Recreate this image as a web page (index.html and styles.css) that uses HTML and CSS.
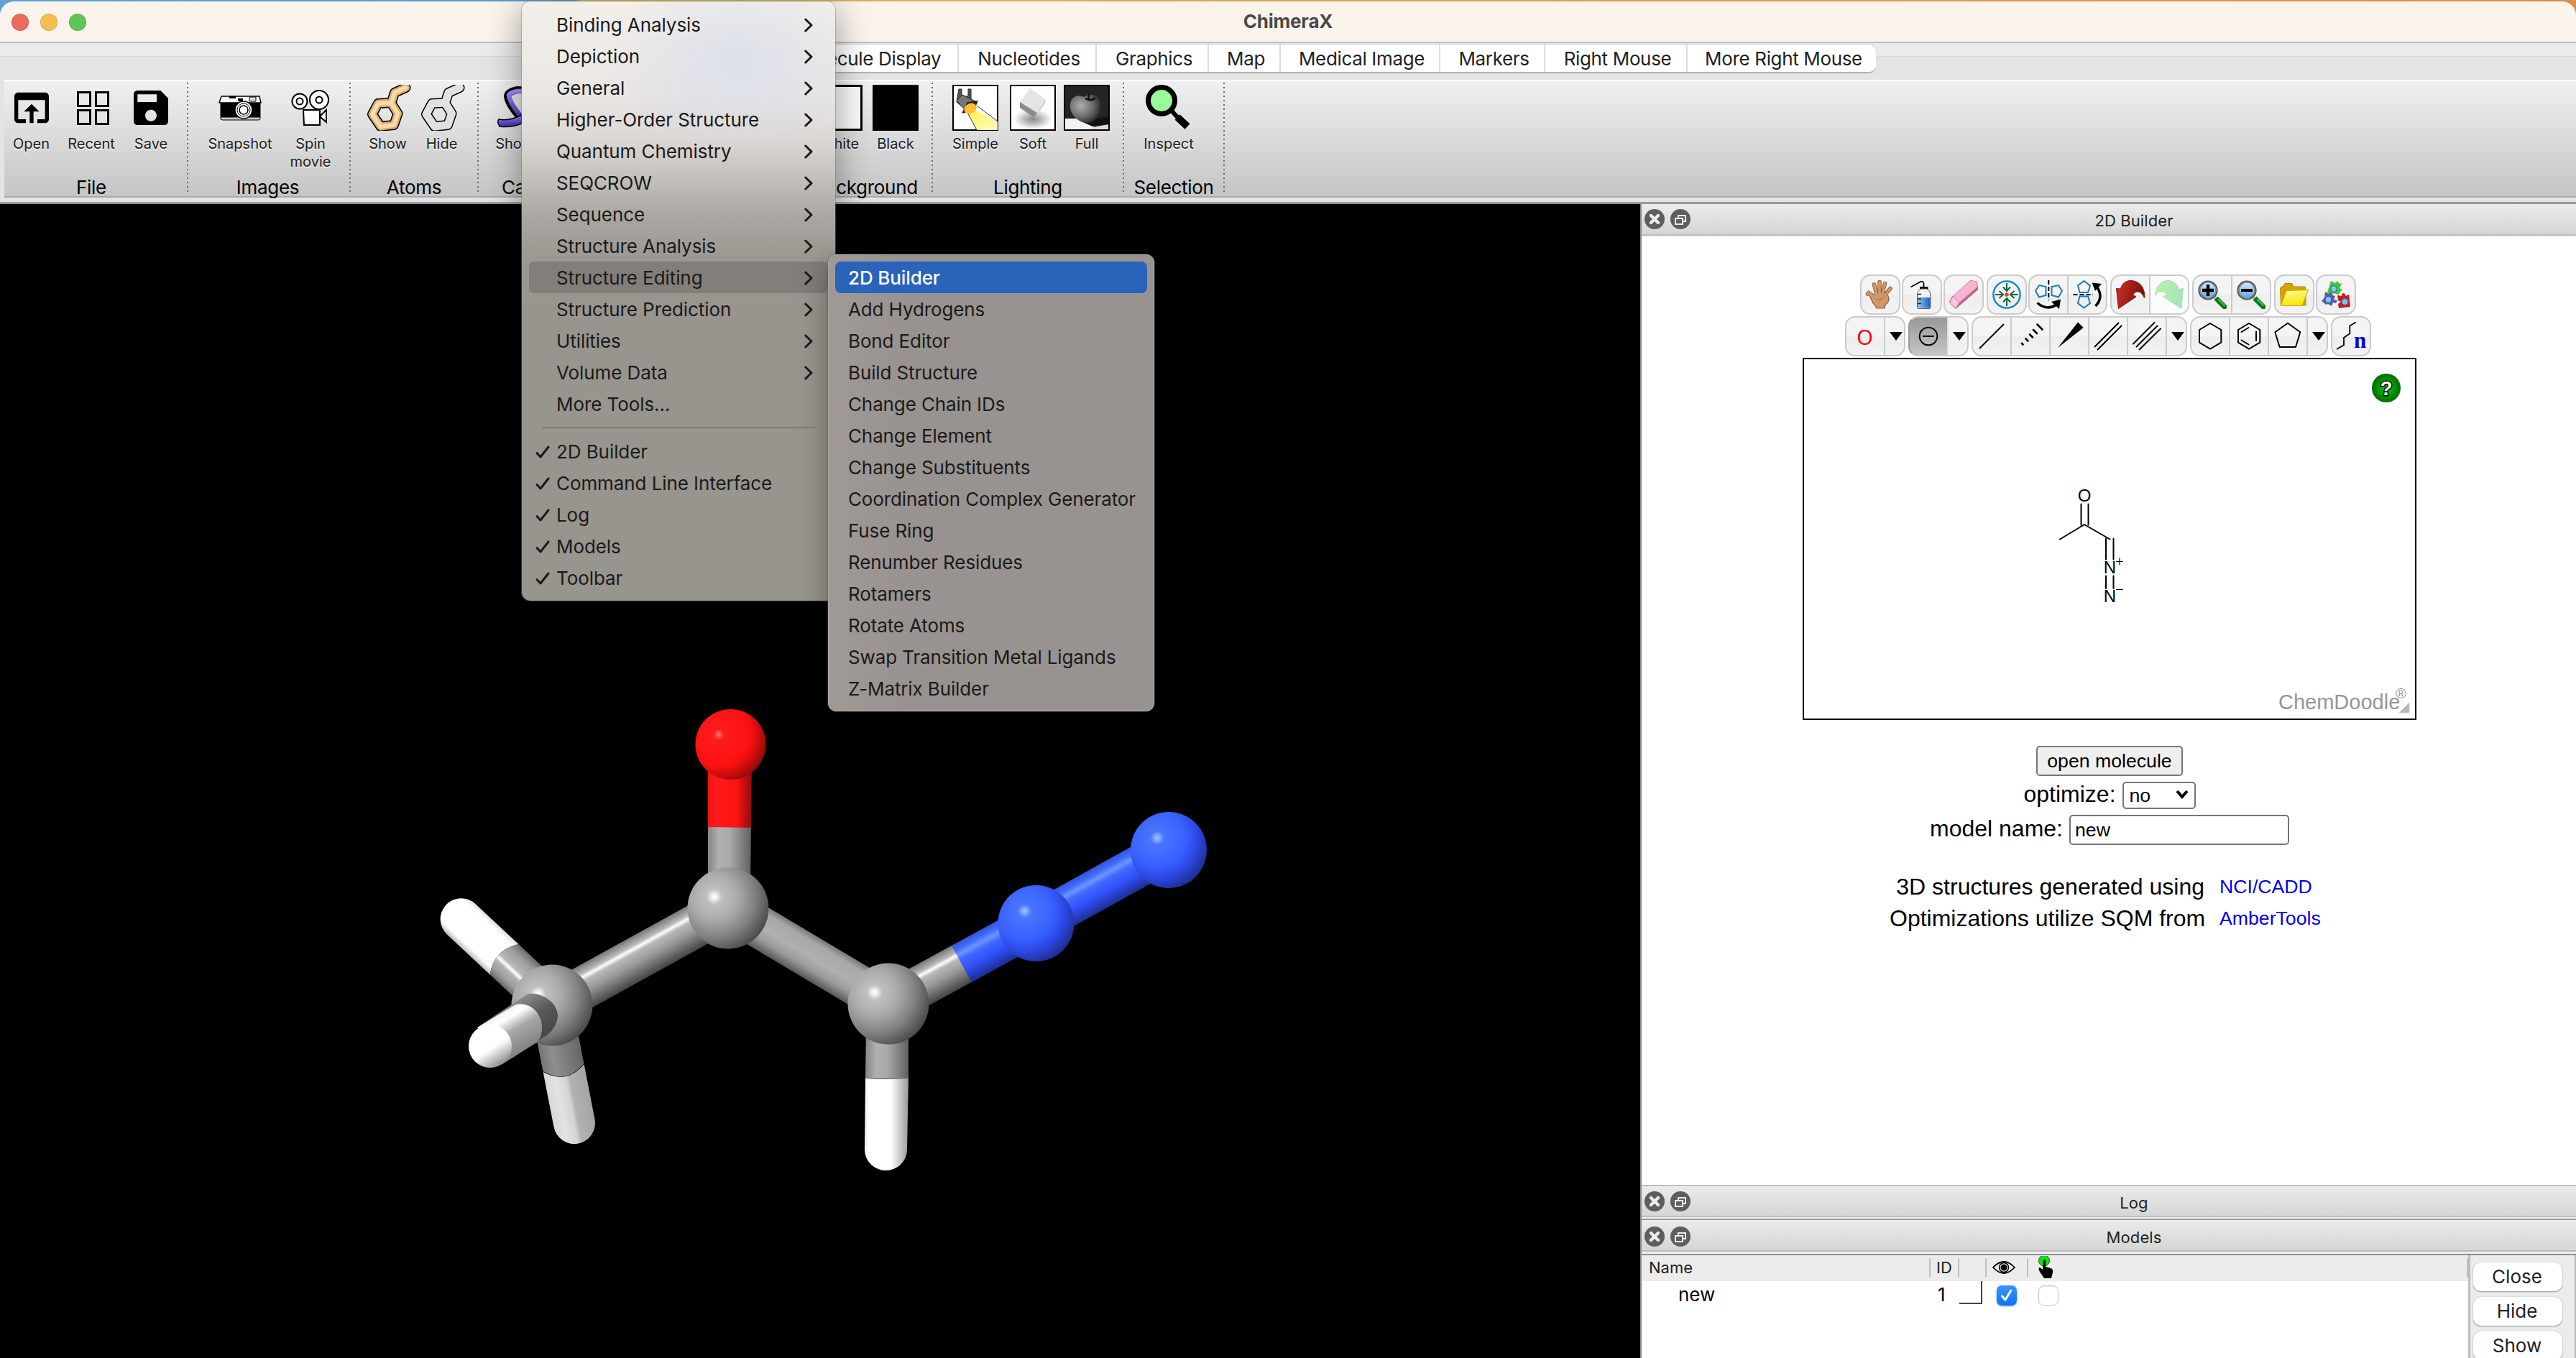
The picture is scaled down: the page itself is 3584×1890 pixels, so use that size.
FILE: index.html
```html
<!DOCTYPE html>
<html lang="en">
<head>
<meta charset="utf-8">
<title>ChimeraX</title>
<link rel="stylesheet" href="styles.css">
</head>
<body>
<svg class="defs" width="0" height="0" aria-hidden="true">
  <defs>
    <symbol id="chev" viewBox="0 0 12 20"><path d="M1.8 2 10 10 1.8 18" fill="none" stroke="currentColor" stroke-width="3" stroke-linecap="round" stroke-linejoin="round"/></symbol>
    <symbol id="check" viewBox="0 0 20 18"><path d="M2 10.500 7 16 18 2" fill="none" stroke="currentColor" stroke-width="3" stroke-linecap="round" stroke-linejoin="round"/></symbol>
    <symbol id="x" viewBox="0 0 28 28"><circle cx="14" cy="14" r="14" fill="#5e5e5e"/><path d="M9 9 19 19M19 9 9 19" stroke="#ececec" stroke-width="4.400" stroke-linecap="round"/></symbol>
    <symbol id="float" viewBox="0 0 28 28"><circle cx="14" cy="14" r="14" fill="#5e5e5e"/><path d="M11 12V9H21V17H18" fill="none" stroke="#ececec" stroke-width="2"/><rect x="7" y="13" width="10" height="8" fill="none" stroke="#ececec" stroke-width="2"/></symbol>
    <symbol id="tri" viewBox="0 0 18 12"><path d="M0 0H18L9 12Z" fill="#000"/></symbol>
    <symbol id="lens" viewBox="0 0 40 40"><path d="M22 23 29 30" stroke="#bbb" stroke-width="4"/><path d="M27.500 27.500 37 37" stroke="#087a1c" stroke-width="7" stroke-linecap="square"/><path d="M28.500 26.500 37.500 35.500" stroke="#3cc45a" stroke-width="2"/><circle cx="14" cy="14" r="12" fill="url(#glass)" stroke="#555" stroke-width="3.200"/><circle cx="14" cy="14" r="11.300" fill="none" stroke="#aaa" stroke-width="1"/></symbol>
    <symbol id="stick" viewBox="0 0 64 64"><path d="M18 26 36 25 45.500 40 40 56 21.500 58 10 41Z M36.500 25 41 11 56.500 4" /></symbol>
    <linearGradient id="glass" x2="0" y2="1"><stop stop-color="#d9ecfb"/><stop offset="1" stop-color="#5aa5e6"/></linearGradient>
    <linearGradient id="liq"><stop stop-color="#8cc8f0"/><stop offset="1" stop-color="#1560c4"/></linearGradient>
    <linearGradient id="fold" x2="0.300" y2="1"><stop stop-color="#fff9a0"/><stop offset="1" stop-color="#fae800"/></linearGradient>
    <linearGradient id="undo" x2="1" y2="0.300"><stop stop-color="#d03028"/><stop offset="1" stop-color="#7d100c"/></linearGradient>
    <linearGradient id="redo" x2="1"><stop stop-color="#b8f2a4"/><stop offset="1" stop-color="#a6e2bd"/></linearGradient>
    <radialGradient id="help"><stop stop-color="#00d400"/><stop offset="1" stop-color="#006a00"/></radialGradient>
    <linearGradient id="rib" x2="0" y2="1"><stop stop-color="#a48cff"/><stop offset="1" stop-color="#3d2aa8"/></linearGradient>
    <radialGradient id="apple" cx=".35" cy=".4" r=".7"><stop stop-color="#b0b0b0"/><stop offset=".6" stop-color="#666"/><stop offset="1" stop-color="#222"/></radialGradient>
    <radialGradient id="soft"><stop stop-color="#888"/><stop offset="1" stop-color="#fff"/></radialGradient>
    <linearGradient id="beam" x2="1" y2="1"><stop stop-color="#fff250"/><stop offset="1" stop-color="#fdfcc0"/></linearGradient>
    <linearGradient id="cg" x2="0" y2="1"><stop stop-color="#777"/><stop offset=".2" stop-color="#bbb"/><stop offset=".27" stop-color="#fff"/><stop offset=".36" stop-color="#b8b8b8"/><stop offset=".6" stop-color="#989898"/><stop offset="1" stop-color="#444"/></linearGradient>
    <linearGradient id="ch" x2="0" y2="1"><stop stop-color="#6a6a6a"/><stop offset=".2" stop-color="#9c9c9c"/><stop offset=".48" stop-color="#b8b8b8"/><stop offset=".56" stop-color="#fff"/><stop offset=".64" stop-color="#b4b4b4"/><stop offset=".85" stop-color="#9a9a9a"/><stop offset="1" stop-color="#666"/></linearGradient>
    <linearGradient id="cf" x2="0" y2="1"><stop stop-color="#777"/><stop offset=".16" stop-color="#a8a8a8"/><stop offset=".5" stop-color="#b0b0b0"/><stop offset=".75" stop-color="#999"/><stop offset="1" stop-color="#585858"/></linearGradient>
    <linearGradient id="cb" x2="0" y2="1"><stop stop-color="#3354d8"/><stop offset=".15" stop-color="#416cff"/><stop offset=".27" stop-color="#6c94ff"/><stop offset=".4" stop-color="#4068ff"/><stop offset=".65" stop-color="#3050fb"/><stop offset="1" stop-color="#1d2f90"/></linearGradient>
    <linearGradient id="vg"><stop stop-color="#858585"/><stop offset=".25" stop-color="#b0b0b0"/><stop offset=".5" stop-color="#aaa"/><stop offset="1" stop-color="#606060"/></linearGradient>
    <linearGradient id="vr"><stop stop-color="#f01414"/><stop offset=".2" stop-color="#ff1a1a"/><stop offset=".65" stop-color="#ff1212"/><stop offset="1" stop-color="#8c0c0c"/></linearGradient>
    <linearGradient id="vw"><stop stop-color="#eee"/><stop offset=".1" stop-color="#fff"/><stop offset=".6" stop-color="#fff"/><stop offset="1" stop-color="#999"/></linearGradient>
    <linearGradient id="hw" x2="0" y2="1"><stop stop-color="#ddd"/><stop offset=".12" stop-color="#fff"/><stop offset=".85" stop-color="#fff"/><stop offset="1" stop-color="#bbb"/></linearGradient>
    <linearGradient id="hf" gradientUnits="userSpaceOnUse" x1="693" y1="1411" x2="725" y2="1463"><stop stop-color="#f2f2f2"/><stop offset=".2" stop-color="#fff"/><stop offset=".5" stop-color="#a8a8a8"/><stop offset="1" stop-color="#858585"/></linearGradient>
    <linearGradient id="df" gradientUnits="userSpaceOnUse" x1="735" y1="1384" x2="770" y2="1438"><stop stop-color="#8a8a8a"/><stop offset=".45" stop-color="#585858"/><stop offset="1" stop-color="#464646"/></linearGradient>
    <linearGradient id="hc" x1=".2" y1=".1" x2=".75" y2=".95"><stop offset=".55" stop-color="#fff"/><stop offset="1" stop-color="#8c8c8c"/></linearGradient>
    <linearGradient id="hl"><stop stop-color="#d8d8d8"/><stop offset=".25" stop-color="#e2e2e2"/><stop offset=".5" stop-color="#d4d4d4"/><stop offset=".6" stop-color="#b2b2b2"/><stop offset="1" stop-color="#a4a4a4"/></linearGradient>
    <linearGradient id="gl"><stop stop-color="#777"/><stop offset=".3" stop-color="#8f8f8f"/><stop offset="1" stop-color="#666"/></linearGradient>
    <radialGradient id="sc" cx=".33" cy=".36" r=".72"><stop stop-color="#fff"/><stop offset=".04" stop-color="#f4f4f4"/><stop offset=".13" stop-color="#c0c0c0"/><stop offset=".4" stop-color="#aaa"/><stop offset=".7" stop-color="#808080"/><stop offset="1" stop-color="#484848"/></radialGradient>
    <radialGradient id="sb" cx=".35" cy=".34" r=".75"><stop stop-color="#a6c8ff"/><stop offset=".12" stop-color="#4875ff"/><stop offset=".5" stop-color="#3860ff"/><stop offset=".7" stop-color="#2c48e6"/><stop offset="1" stop-color="#1b2a80"/></radialGradient>
    <radialGradient id="so" cx=".33" cy=".36" r=".75"><stop stop-color="#ff7a7a"/><stop offset=".1" stop-color="#ff1c1c"/><stop offset=".6" stop-color="#fc1010"/><stop offset=".8" stop-color="#c40c0c"/><stop offset="1" stop-color="#7c0a0a"/></radialGradient>
  </defs>
</svg>

<div class="desktop">
<div class="window">
  <header class="titlebar">
    <div class="lights"><i class="red"></i><i class="yellow"></i><i class="green"></i></div>
    <h1>ChimeraX</h1>
  </header>

  <section class="ribbon">
    <nav class="tabs">
      <span class="tab w104">Home</span><span class="tab w256">Molecule Display</span><span class="tab w192">Nucleotides</span><span class="tab w156">Graphics</span><span class="tab w100">Map</span><span class="tab w222">Medical Image</span><span class="tab w146">Markers</span><span class="tab w198">Right Mouse</span><span class="tab last">More Right Mouse</span>
    </nav>
    <div class="toolbar">
      <div class="group g-file">
        <div class="items">
          <div class="tool w75"><svg viewBox="0 0 24 24"><path d="M19 4H5c-1.110 0-2 .9-2 2v12c0 1.100.89 2 2 2h4v-2H5V8h14v10h-4v2h4c1.100 0 2-.9 2-2V6c0-1.100-.89-2-2-2zm-7 6l-4 4h3v6h2v-6h3l-4-4z"/></svg><span>Open</span></div>
          <div class="tool w92"><svg viewBox="0 0 64 64"><path d="M13.500 10.500h17v19h-17zM38.500 10.500h17v19h-17zM13.500 35.500h17v19h-17zM38.500 35.500h17v19h-17z" fill="none" stroke="#000" stroke-width="3"/></svg><span>Recent</span></div>
          <div class="tool w74"><svg viewBox="0 0 24 24"><path d="M17 3H5c-1.110 0-2 .9-2 2v14c0 1.100.89 2 2 2h14c1.100 0 2-.9 2-2V7l-4-4zm-5 16c-1.660 0-3-1.340-3-3s1.340-3 3-3 3 1.340 3 3-1.340 3-3 3zm3-10H5V5h10v4z"/></svg><span>Save</span></div>
        </div>
        <b>File</b>
      </div>
      <div class="group g-images">
        <div class="items">
          <div class="tool w102"><svg viewBox="0 0 64 64"><path d="M6 16H59L61 25H3Z" fill="#fff" stroke="#000" stroke-width="1.500"/><path d="M17 16h9v3h-9zM29 19h7v4h-7z"/><path d="M45 17h9v6h-9z" fill="#ddd" stroke="#000"/><rect x="4.500" y="25" width="56" height="20" /><path d="M5 45H60V47Q60 49 57 49H8Q5 49 5 47Z" fill="#ccc" stroke="#000"/><circle cx="37" cy="35" r="12" fill="#fff" stroke="#000" stroke-width="1.500"/><circle cx="37" cy="35" r="9" fill="none" stroke="#000"/><circle cx="37" cy="35" r="6" fill="none" stroke="#000" stroke-width="1.500"/></svg><span>Snapshot</span></div>
          <div class="tool w94"><svg viewBox="0 0 64 64"><g fill="#fff" stroke="#000" stroke-width="2"><circle cx="17" cy="23" r="10.500"/><circle cx="44" cy="21" r="13"/><circle cx="17" cy="23" r="4.500"/><circle cx="44" cy="21" r="4.500"/><path d="M22 35H45V56H23ZM46 43 54 35V52L46 45Z"/></g></svg><span>Spin<br>movie</span></div>
        </div>
        <b>Images</b>
      </div>
      <div class="group g-atoms">
        <div class="items">
          <div class="tool w75"><svg viewBox="0 0 64 64" fill="none" stroke-linejoin="round" stroke-linecap="round"><use href="#stick" stroke="#000" stroke-width="14"/><use href="#stick" stroke="#d9ab73" stroke-width="11"/><use href="#stick" stroke="#fbd9a8" stroke-width="6"/></svg><span>Show</span></div>
          <div class="tool w75"><svg viewBox="0 0 64 64" fill="none" stroke-linejoin="round" stroke-linecap="round"><use href="#stick" stroke="#000" stroke-width="14"/><use href="#stick" stroke="#e1e1e1" stroke-width="11"/></svg><span>Hide</span></div>
        </div>
        <b>Atoms</b>
      </div>
      <div class="group g-cartoons">
        <div class="items">
          <div class="tool w75"><svg viewBox="0 0 64 64"><path d="M60 8 36 7Q22 10 22 16Q24 30 46 52L60 60" fill="none" stroke="#000" stroke-width="10"/><path d="M60 8 36 9Q24 11 24 15Q26 28 48 52" fill="none" stroke="url(#rib)" stroke-width="6.500"/><path d="M10 48Q24 51 42 42V54Q26 60 11 58Q7 52 10 48Z" fill="url(#rib)" stroke="#000" stroke-width="1.500"/></svg><span>Show</span></div>
        </div>
        <b class="b-cartoons">Cartoons</b>
      </div>
      <div class="group g-background">
        <div class="items">
          <div class="tool w78"><svg viewBox="0 0 64 64"><rect x="1.500" y="1.500" width="61" height="61" fill="#fafafa" stroke="#000" stroke-width="3"/></svg><span>White</span></div>
          <div class="tool w78"><svg viewBox="0 0 64 64"><rect width="64" height="64"/></svg><span>Black</span></div>
        </div>
        <b>Background</b>
      </div>
      <div class="group g-lighting">
        <div class="items">
          <div class="tool w84"><svg viewBox="0 0 64 64"><rect x="1" y="1" width="62" height="62" fill="#fff" stroke="#000" stroke-width="2"/><path d="M32 35 63 51V63H34L20 37Z" fill="url(#beam)"/><path d="M20 37 34 63M34 29 63 51" stroke="#333" fill="none"/><path d="M9 6h4v10h9V6h4v18l-8 10-12-10Z" fill="#555" stroke="#222"/><path d="M6 22 14 14 34 24 20 38Z" fill="#777" stroke="#222"/><path d="M13 40 21 24 36 22 30 36Z" fill="#222"/><ellipse cx="25" cy="33" rx="9" ry="7" fill="#fdbf2d" transform="rotate(-25 25 33)"/></svg><span>Simple</span></div>
          <div class="tool w76"><svg viewBox="0 0 64 64"><rect x="1" y="1" width="62" height="62" fill="#fff" stroke="#000" stroke-width="2"/><ellipse cx="32" cy="48" rx="27" ry="14" fill="url(#soft)"/><path d="M28 5 50 20 38 39 14 24Z" fill="#e4e4e4"/><path d="M14 24 38 39 34 46 14 32Z" fill="#8c8c8c"/><path d="M38 39 50 20 49 26 34 46Z" fill="#ccc"/></svg><span>Soft</span></div>
          <div class="tool w74"><svg viewBox="0 0 64 64"><rect width="64" height="64" fill="#242424"/><path d="M1 47H22L48 62H1Z" fill="#f2f2f2"/><path d="M22 50 63 44V56L40 58Z" fill="#111"/><path d="M45 58 63 55V63H30Z" fill="#ddd"/><path d="M28 17Q40 10 48 18Q56 30 46 47Q34 58 20 49Q5 38 10 22Q16 12 28 17Z" fill="url(#apple)"/><path d="M36 12Q33 18 36 21M30 19Q38 24 44 18" stroke="#111" stroke-width="2.500" fill="none"/><rect x="1" y="1" width="62" height="62" fill="none" stroke="#000" stroke-width="2"/></svg><span>Full</span></div>
        </div>
        <b>Lighting</b>
      </div>
      <div class="group g-selection">
        <div class="items">
          <div class="tool w120"><svg viewBox="0 0 64 64"><path d="M36 36 44 45" stroke="#000" stroke-width="6"/><path d="M44 45 58 58" stroke="#000" stroke-width="10"/><circle cx="22" cy="22" r="18.500" fill="#98fb98" stroke="#000" stroke-width="7"/></svg><span>Inspect</span></div>
        </div>
        <b>Selection</b>
      </div>
    </div>
  </section>

  <main class="main">
    <div class="viewer">
      <svg width="2282" height="1606" viewBox="0 284 2282 1606">
        <g transform="translate(799 1563) rotate(-11)">
          <path d="M-29 -78V0A29 29 0 0 0 29 0V-78Q0 -54 -29 -78Z" fill="url(#hl)"/>
          <path d="M-29 -150V-79Q0 -54 29 -79V-150Z" fill="url(#gl)"/>
        </g>
        <g transform="translate(641 1280) rotate(43.100)">
          <path d="M0 -30H82Q62 0 82 28H0A29 29 0 0 1 0 -30Z" fill="url(#hw)"/>
          <path d="M82 -30H160V28H82Q62 0 82 -30Z" fill="url(#ch)"/>
        </g>
        <rect x="0" y="-30" width="280" height="60" transform="translate(768 1399) rotate(-28.900)" fill="url(#cg)"/>
        <rect x="0" y="-29.500" width="260" height="59" transform="translate(1013 1264) rotate(30.800)" fill="url(#cf)"/>
        <g transform="translate(1236 1397) rotate(-28.600)"><rect y="-29" width="117" height="58" fill="url(#cg)"/><rect x="116" y="-29" width="118" height="58" fill="url(#cb)"/></g>
        <rect x="0" y="-29" width="211" height="58" transform="translate(1441.500 1285) rotate(-29)" fill="url(#cb)"/>
        <path d="M985 1151H1045L1044 1230H985Z" fill="url(#vg)"/>
        <path d="M985 1060H1046L1045 1152 985 1151Z" fill="url(#vr)"/>
        <path d="M1205 1430H1264V1502L1204 1501Z" fill="url(#vg)"/>
        <path d="M1204 1501Q1234 1503 1264 1501L1262 1600A29.500 29 0 0 1 1203 1600Z" fill="url(#vw)"/>
        <circle cx="768" cy="1399" r="56.500" fill="url(#sc)"/>
        <path d="M667 1428 733 1384Q742 1381 752 1385 774 1394 776 1412 776 1428 762 1440L703 1477Z" fill="url(#df)"/>
        <path d="M664 1430 716 1399Q724 1395 736 1400 752 1408 754 1428 755 1440 748 1450L699 1481Z" fill="url(#hf)"/>
        <circle cx="682" cy="1456" r="30" fill="url(#hc)"/>
        <circle cx="1013" cy="1264" r="56.500" fill="url(#sc)"/>
        <circle cx="1236" cy="1397" r="56.500" fill="url(#sc)"/>
        <circle cx="1016.500" cy="1036" r="49" fill="url(#so)"/>
        <circle cx="1441.500" cy="1285" r="53" fill="url(#sb)"/>
        <circle cx="1626" cy="1183" r="53" fill="url(#sb)"/>
      </svg>
    </div>

    <aside class="dock">
      <div class="dock-title first"><svg><use href="#x"/></svg><svg><use href="#float"/></svg><span>2D Builder</span></div>
      <div class="builder">
        <div class="brow">
          <div class="bset">
            <div class="bgrp"><i class="cell"><svg viewBox="0 0 40 40" stroke-linecap="round" fill="none"><path d="M13 24 4 17.500 2.500 19M15 20 11.500 6M19 18 19 2.500M23 18 26.500 4.500M26 21 34 11.500" stroke="#8d5c38" stroke-width="5.500"/><path d="M10 22Q14 17 28 18L31 22Q34 30 27 34L26 39H15Q13 34 10 32L4 19Z" fill="#d0986a" stroke="#8d5c38" stroke-width="1.200"/><path d="M13 24 4 17.500 2.500 19M15 20 11.500 6M19 20 19 2.500M23 19 26.500 4.500M26 22 34 11.500" stroke="#d0986a" stroke-width="3.700"/><path d="M14 27Q20 28 26 23M17 32Q20 30 21 26" stroke="#a87448" stroke-width="1"/></svg></i></div>
            <div class="bgrp"><i class="cell"><svg viewBox="0 0 40 40"><path d="M4.500 9.500 18 2Q22.500 1 22.500 5V10" fill="none" stroke="#000" stroke-width="1.800"/><rect x="17" y="9" width="11.500" height="3.500"/><path d="M18 12H27Q32 15 32 20V38Q32 39.500 30 39.500H15.500Q13.500 39.500 13.500 38V20Q13.500 15 18 12Z" fill="#f3f0ee" stroke="#555"/><path d="M14 24H31.500V38.500H14Z" fill="url(#liq)"/><path d="M14 19.500H19M14 26H19M14 32.500H19" stroke="#222" stroke-width="1.300"/></svg></i></div>
            <div class="bgrp"><i class="cell"><svg viewBox="0 0 40 40"><path d="M4.700 22 29.700 .5 38.500 2 39.700 13 8.700 39.500 .5 30.500Z" fill="#f7a8cb" stroke="#b0688c"/><path d="M4.700 22 14 31 39.500 9V13.500L9.500 39.500Z" fill="#b96a92"/><path d="M5 22 14 31 9 39.500 .7 31Z" fill="#fbc6de" stroke="#b0688c" stroke-width=".8"/><path d="M5 21.500 14 30.500 39 8 38 2 30 .8Z" fill="#fab4d2"/></svg></i></div>
          </div>
          <div class="bset">
            <div class="bgrp"><i class="cell"><svg viewBox="0 0 40 40" fill="none"><circle cx="20" cy="20" r="18.600" stroke="#1486c6" stroke-width="2.400"/><path d="M20 4V15M15 9.500 20 15 25 9.500M20 36V25M15 30.500 20 25 25 30.500M4 20H15M9.500 15 15 20 9.500 25M36 20H25M30.500 15 25 20 30.500 25" stroke="#0a6b3c" stroke-width="2"/><circle cx="20" cy="20" r="2.800" fill="#e8403a"/></svg></i></div>
            <div class="bgrp"><i class="cell"><svg viewBox="0 0 40 40" fill="none"><path d="M2 15 7 7 16.500 9V21L7 23.500ZM39 15 34 7 24.500 9V21L34 23.500Z" stroke="#1f78c4" stroke-width="2"/><path d="M20.300 0V28" stroke="#000" stroke-width="2" stroke-dasharray="6 3"/><path d="M4.500 31.500Q18 43 31 34" stroke="#000" stroke-width="3.500"/><path d="M24 30 37 26.500 35 40Z" fill="#000"/></svg></i><i class="cell"><svg viewBox="0 0 40 40" fill="none"><path d="M15.300 1 24 7.500 21 17H9.500L7 7.500ZM15.300 38.500 24 32 21 22.500H9.500L7 32Z" stroke="#1f78c4" stroke-width="2"/><path d="M.5 20H28" stroke="#000" stroke-width="2" stroke-dasharray="6 3"/><path d="M31.500 36Q43 24 34 10" stroke="#000" stroke-width="3.500"/><path d="M26.500 3.500 40 5 31 15Z" fill="#000"/></svg></i></div>
          </div>
          <div class="bset">
            <div class="bgrp"><i class="cell"><svg viewBox="0 0 40 40"><path d="M40 24C40 7 30 .5 20 .5 14 .5 8 5 6.500 12L.5 11.500 3.500 39.500 28 23 23.500 20.500C26 15 35 13 39 24Z" fill="url(#undo)" stroke="#8c1511"/></svg></i><i class="cell faded"><svg viewBox="0 0 40 40"><path d="M.5 21C2 6 10 .5 19 .5 26 .5 31 5 33 12.500L39.500 11.500 37 39.500 11.500 23 17 20.500C14 14 5 13 1 21Z" fill="url(#redo)" stroke="#aedfb4"/></svg></i></div>
          </div>
          <div class="bset">
            <div class="bgrp"><i class="cell"><svg viewBox="0 0 40 40"><use href="#lens"/><path d="M6 14H22M14 6V22" stroke="#000" stroke-width="4.400"/></svg></i><i class="cell"><svg viewBox="0 0 40 40"><use href="#lens"/><path d="M6 14H22" stroke="#000" stroke-width="4"/></svg></i></div>
          </div>
          <div class="bset">
            <div class="bgrp"><i class="cell"><svg viewBox="0 0 40 40"><path d="M.5 10.500 5 8 7 4.500H17L19 9H35L36 12V35H1.500Z" fill="#d6a400" stroke="#b08600"/><path d="M9 14.500 39.500 13.500 31 35.500H1.500Z" fill="url(#fold)" stroke="#c9a800"/></svg></i></div>
            <div class="bgrp"><i class="cell"><svg viewBox="0 0 40 40"><path d="M13 1 19 4 22 1 25 5 28 4 25 11 29 13 26 16 24 20 17 18 14 22 8 17Z" fill="#41c832"/><path d="M5 16 10 19 12 16 15 21 19 22 17 27 22 28 20 32 16 31 14 36 9 33 6 34 0 29 4 24Z" fill="#5e56ae"/><path d="M22 21 28 22 29 18 33 19 33 22 38 20 40 37 32 38 24 39 23 33 27 30 23 28Z" fill="#d01822"/><g fill="#7cc6ee" stroke="#2a78a8" stroke-width="1.200"><circle cx="17" cy="12" r="4.300"/><circle cx="9.500" cy="27" r="4.300"/><circle cx="32.500" cy="30" r="4.300"/></g></svg></i></div>
          </div>
        </div>
        <div class="brow">
          <div class="bgrp"><i class="cell o-label">O</i><i class="drop"><svg><use href="#tri"/></svg></i></div>
          <div class="bgrp sel"><i class="cell on"><svg viewBox="0 0 40 40" fill="none" stroke="#000" stroke-width="2"><circle cx="20" cy="20" r="12.300"/><path d="M12 20H28"/></svg></i><i class="drop"><svg><use href="#tri"/></svg></i></div>
          <div class="bgrp"><i class="cell"><svg class="ln" viewBox="0 0 40 40"><path d="M3.500 36.500 36.500 3.500"/></svg></i><i class="cell"><svg class="ln" viewBox="0 0 40 40"><path d="M8 30 9.500 31.500M13.500 23.500 16.500 26.500M19 17.500 23 21.500M24 11 29 16M29.500 3.500 36.500 10.500" stroke-width="2.600"/></svg></i><i class="cell"><svg viewBox="0 0 40 40"><path d="M4 36 32 .5 39.700 8Z"/></svg></i><i class="cell"><svg class="ln" viewBox="0 0 40 40"><path d="M1.500 34.500 34.500 1.500M5.500 38.500 38.500 5.500"/></svg></i><i class="cell"><svg class="ln" viewBox="0 0 40 40"><path d="M1 30.500 30.500 1M5.500 34.500 34.500 5.500M9.500 38.500 39 9.500"/></svg></i><i class="drop"><svg><use href="#tri"/></svg></i></div>
          <div class="bgrp"><i class="cell"><svg class="ln" viewBox="0 0 40 40"><path d="M20 2 35.300 11V28.700L20 37.700 5 28.700V11Z"/></svg></i><i class="cell"><svg class="ln" viewBox="0 0 40 40"><path d="M20 2 35.300 11V28.700L20 37.700 5 28.700V11ZM9.500 14 19.500 8M30 13.500V26M9.500 25.500 19.500 31.500"/></svg></i><i class="cell"><svg class="ln" viewBox="0 0 40 40"><path d="M20 1.700 37.300 14.300 31 35H8.700L2.300 14.300Z"/></svg></i><i class="drop"><svg><use href="#tri"/></svg></i></div>
          <div class="bgrp"><i class="cell"><svg viewBox="0 0 40 40"><path d="M26.700 .5 18.300 5.500V16.300L10 22V32.300L0 38" fill="none" stroke="#000" stroke-width="1.800"/><text class="nn" x="24" y="36">n</text></svg></i></div>
        </div>
        <div class="sketch">
          <svg viewBox="0 0 850 500" width="850" height="500">
            <g stroke="#000" stroke-width="2" fill="none" stroke-linecap="round"><path d="M385.500 201.500V230.500M395.500 201.500V230.500M390 230 356 250.500M390 230 425.500 250.500M420 249.500V278.500M430.500 249.500V278.500M420 301.500V319M430.500 301.500V319"/></g>
            <g class="atom"><text x="390" y="198">O</text><text x="425.500" y="297.500">N</text><text x="425.500" y="338">N</text></g>
            <path d="M434 281.500H444M439 276.500V286.500M434 320.500H444" stroke="#000" stroke-width="1.200"/>
            <circle cx="810" cy="40" r="20" fill="url(#help)"/>
            <text class="q" x="810" y="50">?</text>
            <text class="brand" x="660" y="487">ChemDoodle</text><text class="reg" x="823" y="472">®</text>
            <path d="M828 492 842 478V492ZM834 492 842 484" fill="#b4b4b4" stroke="#ccc"/>
          </svg>
        </div>
        <div class="btn-open">open molecule</div>
        <div class="frow h38"><label>optimize:</label><div class="select"><span>no</span><svg viewBox="0 0 18 13"><path d="M2 2 9 10 16 2" fill="none" stroke="#000" stroke-width="4"/></svg></div></div>
        <div class="frow h42"><label>model name:</label><div class="input">new</div></div>
        <div class="credits"><span>3D structures generated using</span><a>NCI/CADD</a><span>Optimizations utilize SQM from</span><a>AmberTools</a></div>
      </div>
      <div class="dock-title lined"><svg><use href="#x"/></svg><svg><use href="#float"/></svg><span>Log</span></div>
      <div class="dock-title lined two"><svg><use href="#x"/></svg><svg><use href="#float"/></svg><span>Models</span></div>
      <div class="models">
        <div class="table">
          <div class="thead"><span class="c-name">Name</span><span class="c-id">ID</span><span class="c-col"></span><span class="c-eye"><svg width="32" height="18" viewBox="0 0 32 18"><path d="M1 9Q16 -7 31 9Q16 25 1 9Z" fill="none" stroke="#000" stroke-width="1.800"/><circle cx="16" cy="9" r="6.500" fill="none" stroke="#000" stroke-width="1.500"/><circle cx="16" cy="9" r="4.500"/></svg></span><span class="c-sel"><svg width="24" height="32" viewBox="0 0 24 32"><circle cx="9" cy="6.500" r="7.500" fill="#12e012" stroke="#087808"/><path d="M8 6Q9.500 4 11 6V15L18 17Q22 18 21 23L19 31H9L3 22Q0 17 3 16L7 19Z"/></svg></span></div>
          <div class="trow"><span class="r-name">new</span><span class="r-id">1</span><span class="r-col"></span><span class="cb on"><svg width="18" height="18" viewBox="0 0 18 18"><path d="M2.500 10 7 15 14.500 2.500" fill="none" stroke="#fff" stroke-width="3.200" stroke-linecap="round" stroke-linejoin="round"/></svg></span><span class="cb"></span></div>
        </div>
        <div class="buttons"><div>Close</div><div>Hide</div><div>Show</div></div>
      </div>
    </aside>
  </main>
</div>

<div class="menu main-menu">
  <div class="mi">Binding Analysis<svg class="ch"><use href="#chev"/></svg></div>
  <div class="mi">Depiction<svg class="ch"><use href="#chev"/></svg></div>
  <div class="mi">General<svg class="ch"><use href="#chev"/></svg></div>
  <div class="mi">Higher-Order Structure<svg class="ch"><use href="#chev"/></svg></div>
  <div class="mi">Quantum Chemistry<svg class="ch"><use href="#chev"/></svg></div>
  <div class="mi">SEQCROW<svg class="ch"><use href="#chev"/></svg></div>
  <div class="mi">Sequence<svg class="ch"><use href="#chev"/></svg></div>
  <div class="mi">Structure Analysis<svg class="ch"><use href="#chev"/></svg></div>
  <div class="mi open">Structure Editing<svg class="ch"><use href="#chev"/></svg></div>
  <div class="mi">Structure Prediction<svg class="ch"><use href="#chev"/></svg></div>
  <div class="mi">Utilities<svg class="ch"><use href="#chev"/></svg></div>
  <div class="mi">Volume Data<svg class="ch"><use href="#chev"/></svg></div>
  <div class="mi">More Tools...</div>
  <hr>
  <div class="mi ck"><svg><use href="#check"/></svg>2D Builder</div>
  <div class="mi ck"><svg><use href="#check"/></svg>Command Line Interface</div>
  <div class="mi ck"><svg><use href="#check"/></svg>Log</div>
  <div class="mi ck"><svg><use href="#check"/></svg>Models</div>
  <div class="mi ck"><svg><use href="#check"/></svg>Toolbar</div>
</div>
<div class="menu sub-menu">
  <div class="mi active">2D Builder</div>
  <div class="mi">Add Hydrogens</div>
  <div class="mi">Bond Editor</div>
  <div class="mi">Build Structure</div>
  <div class="mi">Change Chain IDs</div>
  <div class="mi">Change Element</div>
  <div class="mi">Change Substituents</div>
  <div class="mi">Coordination Complex Generator</div>
  <div class="mi">Fuse Ring</div>
  <div class="mi">Renumber Residues</div>
  <div class="mi">Rotamers</div>
  <div class="mi">Rotate Atoms</div>
  <div class="mi">Swap Transition Metal Ligands</div>
  <div class="mi">Z-Matrix Builder</div>
</div>
</div>
</body>
</html>
```
FILE: styles.css
```css
* { box-sizing: border-box; }
body { margin: 0; font-family: Inter, "Liberation Sans", sans-serif; font-size: 26px; color: #222; }
.defs { position: absolute; }
i { font-style: normal; }
.desktop { position: relative; width: 3584px; height: 1890px; overflow: hidden; padding-top: 2px;
  background: linear-gradient(90deg, #5ca3d4 0, #5a9cc8 800px, #d3b95c 810px, #d9a455 1900px, #d9904a 100%); }
.window { display: flex; flex-direction: column; height: 1888px; border-radius: 20px 20px 0 0; overflow: hidden; background: #ebebeb; }

.titlebar { flex: none; height: 58px; background: #faf4ed; border-bottom: 2px solid #c2bebb; display: grid; grid-template-columns: 1fr auto 1fr; align-items: center; }
.lights { display: flex; gap: 16px; padding-left: 16px; }
.lights i { width: 24px; height: 24px; border-radius: 50%; border: 1px solid rgba(0,0,0,.12); }
.red { background: #ed6a5e; } .yellow { background: #f5bf4f; } .green { background: #61c554; }
.titlebar h1 { margin: 0; font-size: 26px; font-weight: 700; color: #4b4947; letter-spacing: -.2px; line-height: 56px; padding-bottom: 2px; }

.ribbon { flex: none; height: 223px; padding-top: 1px; display: flex; flex-direction: column; align-items: center;
  background: linear-gradient(#ebebeb 18px, #d8d8d8 18px, #d8d8d8 19px, #e4e4e4 19px, #e4e4e4 219px, #d6d6d6 219px, #eee 221px, #999 221px); }
.tabs { flex: none; display: flex; width: 1636px; height: 41px; background: #fff; border-radius: 10px; border-top: 1px solid #d0d0d0; border-bottom: 2px solid #b4b4b4; box-shadow: 0 0 1px #bbb; }
.tab { flex: none; text-align: center; line-height: 40px; height: 38px; padding-left: 5px; border-right: 2px solid #dedede; white-space: nowrap; letter-spacing: -.35px; }
.tab.last { flex: 1; border: 0; }
.w74 { width: 74px; } .w75 { width: 75px; } .w76 { width: 76px; } .w78 { width: 78px; } .w84 { width: 84px; } .w92 { width: 92px; } .w94 { width: 94px; }
.w100 { width: 100px; } .w102 { width: 102px; } .w104 { width: 104px; } .w120 { width: 120px; } .w146 { width: 146px; } .w156 { width: 156px; }
.w192 { width: 192px; } .w198 { width: 198px; } .w222 { width: 222px; } .w256 { width: 256px; }

.toolbar { flex: none; align-self: stretch; margin: 9px 0 0 6px; height: 164px; display: flex; border-top: 2px solid #fdfdfd; border-bottom: 2px solid #ababab; background: linear-gradient(#f0f0f0, #c5c5c5); }
.group { flex: none; display: flex; flex-direction: column; justify-content: space-between; align-items: center; padding: 5px 2px 0 0;
  background: repeating-linear-gradient(#6a6a6a 0 2px, transparent 2px 6px) right 2px / 2px 156px no-repeat; }
.group b { font-weight: 400; color: #000; line-height: 32px; margin-bottom: -4px; letter-spacing: -.3px; }
.items { display: flex; align-self: flex-start; height: 114px; }
.tool { flex: none; display: flex; flex-direction: column; align-items: center; font-size: 20px; line-height: 25px; text-align: center; text-shadow: 0 2px 1px rgba(255,255,255,.6); }
.tool svg { flex: none; width: 64px; height: 64px; margin-bottom: 6px; }
.g-file { width: 256px; } .g-file b { margin-right: 12px; }
.g-images { width: 226px; } .g-images .items { padding-left: 21px; } .g-images b { margin-right: 3px; }
.g-atoms { width: 178px; } .g-atoms .items { padding-left: 14px; }
.g-cartoons { width: 446px; } .g-cartoons .items { padding-left: 12px; } .group .b-cartoons { align-self: flex-start; margin-left: 32px; }
.g-background { width: 186px; } .g-background .items { padding-left: 17px; } .g-background b { margin-left: 1px; }
.g-lighting { width: 266px; } .g-lighting .items { padding-left: 17px; }
.g-selection { width: 140px; } .g-selection .items { padding-left: 2px; }

.main { flex: 1; display: flex; min-height: 0; background: #000; border-top: 1px solid #999; }
.viewer { flex: none; width: 2282px; }
.viewer svg { display: block; }
.dock { flex: 1; display: flex; flex-direction: column; background: #ebebeb; border-left: 2px solid #8e8e8e; min-width: 0; }
.dock-title { flex: none; height: 46px; display: flex; align-items: center; gap: 8px; padding: 0 6px 2px 4px; font-size: 22px;
  background: linear-gradient(#ebebeb, #d6d6d6 42px, #bcbcbc 42px, #bcbcbc 44px, #efefef 44px); }
.dock-title.first { padding-bottom: 4px; }
.dock-title svg { flex: none; width: 28px; height: 28px; }
.dock-title span { flex: 1; text-align: center; padding-top: 3px; letter-spacing: .1px; }
.dock-title.lined { height: 47px; border-top: 1px solid #9c9c9c; }
.dock-title.two { height: 49px; border-top-width: 2px; }

.builder { flex: 1; min-height: 0; background: #fff; padding: 52px 0 0 2px; display: flex; flex-direction: column; align-items: center; font-family: "Liberation Sans", sans-serif; color: #000; font-size: 26.670px; }
.brow { flex: none; display: flex; gap: 4px; margin-bottom: 2px; padding-right: 5px; }
.bset { display: flex; gap: 2px; }
.bgrp { display: flex; height: 56px; border: 2px solid #cbcbcb; border-radius: 14px; overflow: hidden; background: linear-gradient(#f4f4f4 50%, #ededed 50%, #f3f3f3); }
.cell { width: 52px; height: 52px; display: flex; align-items: center; justify-content: center; }
.cell + .cell, .drop { border-left: 2px solid #cbcbcb; }
.cell + .cell { width: 54px; }
.drop { width: 28px; height: 52px; display: flex; align-items: center; justify-content: center; padding-left: 4px; }
.drop svg { width: 18px; height: 12px; flex: none; }
.cell svg { width: 40px; height: 40px; overflow: visible; }
.faded { background: #fcfcfc; }
.sel { background: linear-gradient(90deg, #999 54px, transparent 54px), linear-gradient(#f4f4f4 50%, #ededed 50%, #f3f3f3); border-left-color: #999; }
.sel .on { background: linear-gradient(#989898, #c6c6c6); }
.sel .drop { border-left-color: #e0e0e0; }
.o-label { font: 29px "Noto Sans", sans-serif; color: #f00; }
.ln { fill: none; stroke: #000; stroke-width: 2; stroke-linejoin: round; stroke-linecap: round; }
.nn { font: bold 31px "Liberation Serif", serif; fill: #0000d8; }
.sketch { flex: none; width: 854px; height: 504px; border: 2px solid #000; }
.sketch svg { display: block; }
.atom { font-size: 24px; text-anchor: middle; }
.q { font-size: 28px; font-weight: bold; text-anchor: middle; fill: #fff; stroke: #000; stroke-width: 3px; paint-order: stroke; }
.brand { font-size: 29px; fill: #969696; }
.reg { font-size: 20px; fill: #969696; }
.btn-open { flex: none; width: 204px; height: 42px; margin-top: 36px; border: 2px solid #767676; border-radius: 5px; background: #efefef; text-align: center; line-height: 38px; }
.frow { flex: none; display: flex; margin-top: 8px; }
.frow label { font-size: 32px; margin-right: 9px; }
.h38 { height: 38px; } .h38 label { line-height: 34px; }
.h42 { height: 42px; } .h42 label { line-height: 38px; }
.select { width: 102px; border: 2px solid #767676; border-radius: 5px; display: flex; justify-content: space-between; align-items: center; padding: 0 8px; }
.select svg { width: 18px; height: 13px; margin-bottom: 4px; }
.input { width: 306px; border: 2px solid #767676; border-radius: 5px; padding-left: 6px; line-height: 38px; }
.credits { flex: none; margin: 36px 12px 0 0; display: grid; grid-template-columns: 438px 141px; column-gap: 21px; line-height: 44px; white-space: nowrap; }
.credits span { font-size: 32px; text-align: right; }
.credits a { color: #0000ee; }

.models { flex: none; height: 145px; border-top: 2px solid #8f8f8f; display: flex; }
.table { width: 1152px; background: #fff; border-right: 2px solid #bdbdbd; font-size: 26px; }
.thead { display: flex; height: 36px; background: #ececec; font-size: 22px; align-items: center; }
.thead span { height: 26px; line-height: 26px; border-right: 2px solid #bfbfbf; margin-bottom: 2px; }
.c-name { width: 402px; padding-left: 10px; } .c-id { width: 40px; padding-left: 8px; } .c-col { width: 38px; } .c-eye { width: 58px; padding-left: 8px; }
.thead .c-sel { flex: 1; padding-left: 13px; }
.c-eye svg { display: block; margin-top: 4px; } .c-sel svg { display: block; margin-top: -3px; }
.trow { display: flex; height: 40px; color: #000; line-height: 38px; }
.r-name { width: 412px; padding-left: 51px; } .r-id { width: 30px; }
.r-col { width: 32px; height: 32px; border-right: 2px solid #444; border-bottom: 2px solid #444; }
.cb { width: 28px; height: 28px; margin: 6px 0 0 20px; border-radius: 7px; border: 1.500px solid #c8c8c8; display: flex; align-items: center; justify-content: center; box-shadow: inset 0 1px 2px rgba(0,0,0,.12); }
.cb + .cb { margin-left: 30px; }
.cb.on { background: linear-gradient(#3a96ff, #0a72f5); border: 0; box-shadow: 0 1px 3px #6aa8f5; }
.buttons { flex: 1; padding: 10px 0 0 4px; display: flex; flex-direction: column; gap: 8px; border-left: 1px solid #bdbdbd; border-right: 2px solid #b8b8b8; }
.buttons div { flex: none; width: 124px; height: 40px; padding-right: 2px; background: #fff; border-radius: 11px; text-align: center; line-height: 40px; box-shadow: 0 1px 2px rgba(0,0,0,.35), 0 0 1px rgba(0,0,0,.3); }

.menu { position: absolute; color: #1b1a19; padding: 10px; border-radius: 12px; }
.main-menu { left: 726px; top: 2px; width: 436px; height: 834px; box-shadow: 0 0 0 1px rgba(120,120,120,.45), 0 10px 50px rgba(0,0,0,.4);
  background: radial-gradient(ellipse 190px 140px at 300px 85px, rgba(214,221,236,.75), rgba(214,221,236,0)), linear-gradient(#f3f0ea, #eae6e3 130px, #dcd8d4 190px, #c4c0bb 245px, #aaa6a1 300px, #9b9791 360px, #98948e 430px); }
.sub-menu { left: 1152px; top: 354px; width: 454px; height: 636px; background: linear-gradient(90deg, #a09a96, #989390 110px); box-shadow: inset 0 0 0 1px #aaa6a2, 0 0 0 1px rgba(80,80,80,.5), 0 10px 40px rgba(0,0,0,.35); }
.mi { height: 44px; padding-top: 2px; line-height: 44px; border-radius: 8px; white-space: nowrap; display: flex; align-items: center; letter-spacing: -.08px; }
.main-menu .mi { padding-left: 38px; }
.main-menu .ck { padding-left: 9px; }
.ck svg { width: 20px; height: 18px; margin-right: 9px; }
.ch { width: 12px; height: 20px; margin: 0 21px 0 auto; }
.main-menu .open { background: #827e79; }
.main-menu hr { margin: 10px 18px; border: 0; height: 2px; background: #807c77; }
.sub-menu .mi { padding-left: 18px; letter-spacing: -.12px; }
.sub-menu .active { background: #2a63ba; color: #fff; font-weight: 500; }
```
